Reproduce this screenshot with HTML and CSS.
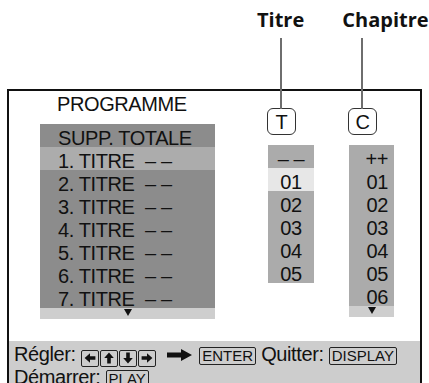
FILE: index.html
```html
<!DOCTYPE html>
<html lang="fr">
<head>
  <meta charset="UTF-8">
  <title>Programme</title>
  <link rel="stylesheet" href="styles.css">
</head>
<body>

<div class="callouts">
  <span class="callout callout-t">Titre</span>
  <span class="callout callout-c">Chapitre</span>
</div>

<div class="screen">
  <div class="screen-body">
    <div class="menu">
      <div class="menu-title">PROGRAMME</div>
      <ul class="title-list">
        <li class="row">SUPP. TOTALE</li>
        <li class="row row-on"><span class="name">1. TITRE</span><span class="dash">– –</span></li>
        <li class="row"><span class="name">2. TITRE</span><span class="dash">– –</span></li>
        <li class="row"><span class="name">3. TITRE</span><span class="dash">– –</span></li>
        <li class="row"><span class="name">4. TITRE</span><span class="dash">– –</span></li>
        <li class="row"><span class="name">5. TITRE</span><span class="dash">– –</span></li>
        <li class="row"><span class="name">6. TITRE</span><span class="dash">– –</span></li>
        <li class="row"><span class="name">7. TITRE</span><span class="dash">– –</span></li>
        <li class="more"><span class="tri"></span></li>
      </ul>
    </div>

    <div class="pick pick-t">
      <div class="tag">T</div>
      <ul class="col col-t">
        <li class="cell">– –</li>
        <li class="cell cell-on">01</li>
        <li class="cell">02</li>
        <li class="cell">03</li>
        <li class="cell">04</li>
        <li class="cell">05</li>
      </ul>
    </div>

    <div class="pick pick-c">
      <div class="tag">C</div>
      <ul class="col col-c">
        <li class="cell">++</li>
        <li class="cell">01</li>
        <li class="cell">02</li>
        <li class="cell">03</li>
        <li class="cell">04</li>
        <li class="cell">05</li>
        <li class="cell">06</li>
        <li class="more"><span class="tri"></span></li>
      </ul>
    </div>
  </div>

  <div class="help">
    <div class="help-line">
      Régler:
      <span class="keys">
        <span class="arrow-key"><svg width="12" height="12" viewBox="0 0 10 10"><path d="M0.5 5 L5 1 V3.5 H9.5 V6.5 H5 V9 Z" fill="#111"/></svg></span><span class="arrow-key"><svg width="12" height="12" viewBox="0 0 10 10"><path d="M5 0.5 L9 5 H6.5 V9.5 H3.5 V5 H1 Z" fill="#111"/></svg></span><span class="arrow-key"><svg width="12" height="12" viewBox="0 0 10 10"><path d="M5 9.5 L9 5 H6.5 V0.5 H3.5 V5 H1 Z" fill="#111"/></svg></span><span class="arrow-key"><svg width="12" height="12" viewBox="0 0 10 10"><path d="M9.5 5 L5 1 V3.5 H0.5 V6.5 H5 V9 Z" fill="#111"/></svg></span>
      </span>
      <svg class="go" width="25" height="12" viewBox="0 0 25 12"><path d="M0 3.5 H14 V0 L25 6 L14 12 V8.5 H0 Z" fill="#111"/></svg>
      <span class="key">ENTER</span> Quitter: <span class="key">DISPLAY</span>
    </div>
    <div class="help-line">
      Démarrer: <span class="key">PLAY</span>
    </div>
  </div>
</div>

</body>
</html>
```

FILE: styles.css
```css
html, body {
  margin: 0;
  padding: 0;
}

body {
  width: 429px;
  height: 383px;
  overflow: hidden;
  background-color: #fff;
  color: #111;
  font-family: 'Liberation Sans', Arial, sans-serif;
  font-size: 20px;
  letter-spacing: -0.4px;
}

ul {
  list-style: none;
  margin: 0;
  padding: 0;
}

/* labels above the screen */
.callouts {
  display: flex;
  height: 89px;
  box-sizing: border-box;
  padding: 6px 0 0 257px;
  font-family: 'Open Sans', sans-serif;
  font-weight: bold;
  font-size: 20px;
  letter-spacing: 0;
  line-height: 27px;
  color: #111;
}

.callout-c {
  margin-left: 38px;
}

/* tv screen frame */
.screen {
  margin-left: 7px;
  width: 415px;
  height: 320px;
  box-sizing: border-box;
  border: 2px solid #111;
}

.screen-body {
  display: flex;
  align-items: flex-start;
  height: 250px;
}

.menu {
  margin-left: 31px;
  width: 175px;
  padding-top: 2px;
}

.menu-title {
  padding-left: 17px;
  line-height: 22px;
}

.title-list {
  margin-top: 9px;
  background-color: #8c8c8c;
}

.row {
  height: 23px;
  line-height: 28px;
  padding-left: 18px;
  white-space: nowrap;
}

.row-on {
  background-color: #acacac;
}

.name {
  display: inline-block;
  width: 87px;
}

.more {
  height: 11px;
  background-color: #cecece;
  display: flex;
  justify-content: center;
  padding-top: 1px;
  box-sizing: border-box;
}

.tri {
  width: 0;
  height: 0;
  border-left: 4px solid transparent;
  border-right: 4px solid transparent;
  border-top: 7px solid #111;
}

/* title / chapter pickers */
.pick {
  margin-top: 17px;
}

.pick-t {
  margin-left: 52px;
}

.pick-c {
  margin-left: 34px;
}

.tag {
  position: relative;
  width: 29px;
  height: 27px;
  box-sizing: border-box;
  border: 1.5px solid #333;
  border-radius: 6px;
  text-align: center;
  line-height: 26px;
  font-size: 20px;
}

.tag::before {
  content: "";
  position: absolute;
  left: 12px;
  bottom: 100%;
  width: 2px;
  height: 71px;
  background-color: #6e6e6e;
}

.col {
  margin: 10px 0 0 1px;
  background-color: #ababab;
}

.col-t {
  width: 46px;
  text-align: center;
}

.col-c {
  width: 45px;
  text-align: right;
}

.cell {
  height: 23px;
  line-height: 28px;
}

.col-c .cell {
  padding-right: 6px;
}

.cell-on {
  background-color: #e7e7e7;
}

/* help bar */
.help {
  background-color: #cdcdcd;
  height: 80px;
  padding: 3px 0 0 5px;
  line-height: 21px;
  white-space: nowrap;
}

.keys {
  display: inline-flex;
  gap: 1px;
  vertical-align: -3px;
}

.arrow-key {
  display: inline-flex;
  align-items: center;
  justify-content: center;
  width: 18px;
  height: 17px;
  box-sizing: border-box;
  border: 1px solid #222;
  border-radius: 2px;
}

.go {
  margin: 0 2px 0 6px;
  vertical-align: 0;
}

.key {
  display: inline-block;
  font-size: 15px;
  letter-spacing: 0;
  line-height: 16px;
  padding: 0 2px;
  border: 1px solid #222;
  border-radius: 2px;
}
```
